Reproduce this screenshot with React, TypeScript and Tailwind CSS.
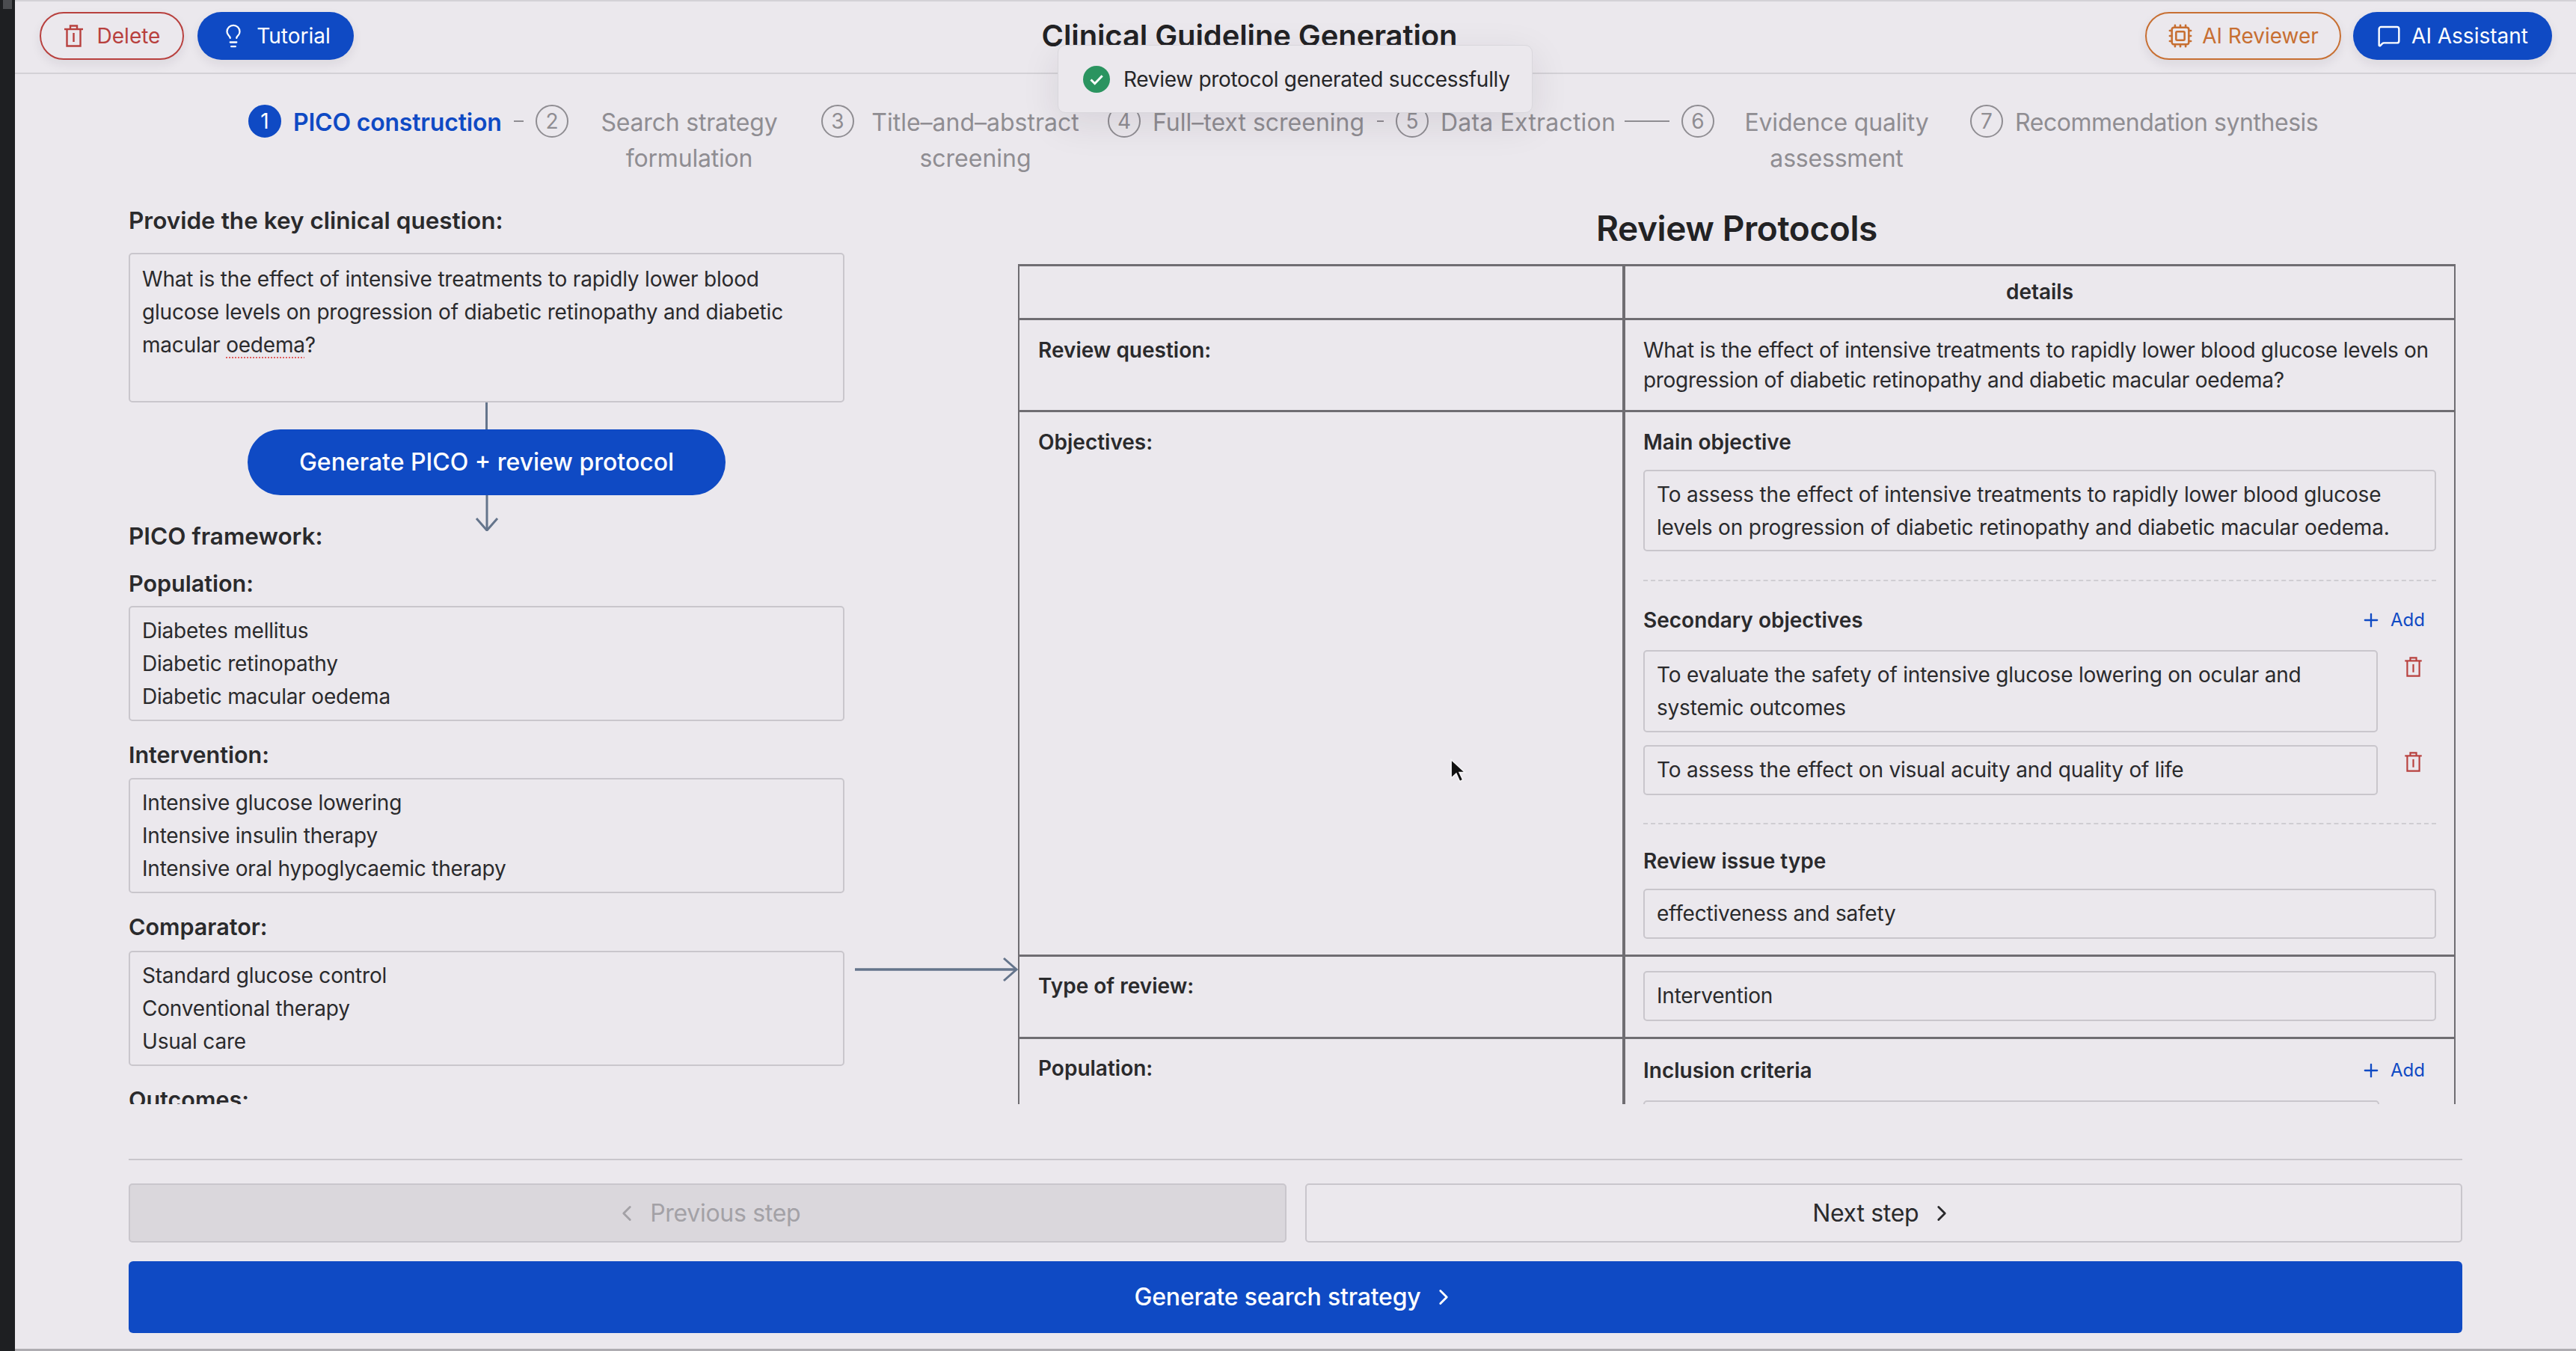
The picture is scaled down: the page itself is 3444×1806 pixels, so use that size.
// App.tsx
import React from "react";
import { ChevronLeft, ChevronRight, Cpu, Lightbulb, MessageSquare, Plus } from "lucide-react";

function TrashIcon({ className }: { className?: string }) {
  return (
    <svg viewBox="0 0 26 30" fill="none" stroke="currentColor" strokeWidth="2.4" className={className}>
      <path d="M0.5 6h25" />
      <path d="M8.5 6V1.5h9V6" />
      <path d="M4 6v22.5h18V6" />
      <path d="M13 11v12" />
    </svg>
  );
}

function Cursor() {
  return (
    <svg viewBox="0 0 24 34" className="absolute left-[1937px] top-[1012px] z-20 h-[36px] w-[25px]">
      <path
        d="M3 3v24l6.5-6 4.5 10 4-2-4.5-9.5H21z"
        fill="#111"
        stroke="#f6f5f7"
        strokeWidth="1.5"
      />
    </svg>
  );
}

function Step({
  num,
  active,
  label,
  textClass,
}: {
  num: number;
  active?: boolean;
  label: string;
  textClass: string;
}) {
  return (
    <div className="flex shrink-0 items-start">
      <span
        className={[
          "flex h-[44px] w-[44px] shrink-0 items-center justify-center rounded-full border-2 text-[28px]",
          active ? "border-[#0f4ac4] bg-[#0f4ac4] text-white" : "border-[#8f8d92] text-[#8f8d92]",
        ].join(" ")}
      >
        {num}
      </span>
      <span
        className={[
          "text-[32px] leading-[48px]",
          active ? "font-semibold text-[#0f4ac4]" : "text-[#8f8d92]",
          textClass,
        ].join(" ")}
      >
        {label}
      </span>
    </div>
  );
}

function Box({ children, className }: { children: React.ReactNode; className?: string }) {
  return (
    <div
      className={[
        "rounded-[5px] border-2 border-[#c9c6cc] px-[16px] text-[28px] leading-[44px] tracking-[-0.2px] text-[#2a2a2c]",
        className ?? "",
      ].join(" ")}
    >
      {children}
    </div>
  );
}

function Field({ label, lines, className }: { label: string; lines: string[]; className: string }) {
  return (
    <div>
      <div className="mt-[23px] text-[30.5px] font-semibold leading-[44px] text-[#2a2a2c]">{label}</div>
      <Box className={className}>
        {lines.map((l) => (
          <div key={l}>{l}</div>
        ))}
      </Box>
    </div>
  );
}

function SubHead({ label, add }: { label: string; add?: boolean }) {
  return (
    <div className="flex h-[44px] items-center justify-between">
      <span className="text-[28px] font-semibold text-[#2a2a2c]">{label}</span>
      {add && (
        <span className="flex items-center gap-[12px] pr-[15px] text-[24px] text-[#0f4ac4]">
          <Plus className="h-[28px] w-[28px]" strokeWidth={2} />
          Add
        </span>
      )}
    </div>
  );
}

function Row({
  label,
  children,
  className,
  labelClass,
}: {
  label: string;
  children: React.ReactNode;
  className?: string;
  labelClass?: string;
}) {
  return (
    <div className={["grid grid-cols-[806px_1fr] border-b-[3px] border-[#6f6d72]", className ?? ""].join(" ")}>
      <div className={["pl-[25px] text-[28px] font-semibold leading-[44px] text-[#2a2a2c]", labelClass ?? ""].join(" ")}>
        {label}
      </div>
      <div className="border-l-4 border-[#6f6d72] px-[24px]">{children}</div>
    </div>
  );
}

export default function App() {
  return (
    <main className="relative flex h-screen w-screen overflow-hidden bg-[#ebe8ed] font-['Inter',sans-serif] text-[#2a2a2c]">
      <Cursor />

      {/* window edge on the left */}
      <div className="w-[20px] shrink-0 bg-[#1e1f22]">
        <div className="mx-[4px] h-[12px] bg-[#4b4c50]" />
      </div>

      <div className="relative flex min-w-0 flex-1 flex-col border-t-2 border-b-[3px] border-t-[#d3d1d6] border-b-[#aeacb1]">
        {/* toast */}
        <div className="absolute left-[1394px] top-[58px] z-10 flex h-[91px] w-[635px] items-center gap-[18px] rounded-[10px] border border-[#d9d7dc] bg-[#ebe8ed] pl-[33px] shadow-[0_14px_50px_rgba(40,30,50,0.10)]">
          <svg viewBox="0 0 36 36" className="h-[36px] w-[36px]">
            <circle cx="18" cy="18" r="18" fill="#2b9460" />
            <path d="M10.5 18.5l5.2 5.2 10-10.5" fill="none" stroke="#fff" strokeWidth="3" />
          </svg>
          <span className="text-[28px] tracking-[-0.3px] text-[#262628]">Review protocol generated successfully</span>
        </div>

        <header className="flex h-[97px] shrink-0 items-center justify-between border-b-2 border-[#d3d1d6] pb-[3px] pl-[33px] pr-[32px]">
          <div className="flex items-center gap-[18px]">
            <button className="flex h-[64px] w-[193px] items-center justify-center gap-[18px] rounded-full border-2 border-[#b8403e] text-[28px] text-[#b8403e] shadow-[0_6px_14px_rgba(40,30,50,0.08)]">
              <TrashIcon className="h-[30px] w-[27px]" />
              Delete
            </button>
            <button className="flex h-[64px] w-[209px] items-center justify-center gap-[14px] rounded-full bg-[#0f4ac4] text-[28px] text-white shadow-[0_6px_14px_rgba(40,30,50,0.08)]">
              <Lightbulb className="h-[34px] w-[34px]" strokeWidth={1.6} />
              Tutorial
            </button>
          </div>
          <h1 className="text-[40px] font-semibold tracking-[-0.1px] text-[#222224]">Clinical Guideline Generation</h1>
          <div className="flex items-center gap-[16px]">
            <button className="flex h-[64px] w-[262px] items-center justify-center gap-[12px] rounded-full border-2 border-[#c76f32] text-[28px] text-[#c76f32] shadow-[0_6px_14px_rgba(40,30,50,0.08)]">
              <Cpu className="h-[34px] w-[34px]" strokeWidth={1.8} />
              AI Reviewer
            </button>
            <button className="flex h-[64px] w-[266px] items-center justify-center gap-[14px] rounded-full bg-[#0f4ac4] text-[28px] text-white shadow-[0_6px_14px_rgba(40,30,50,0.08)]">
              <MessageSquare className="h-[32px] w-[32px]" strokeWidth={1.8} />
              AI Assistant
            </button>
          </div>
        </header>

        {/* steps */}
        <nav className="flex h-[171px] shrink-0 items-start pl-[312px] pt-[41px]">
          <Step num={1} active label="PICO construction" textClass="ml-[16px] w-[278px] whitespace-nowrap tracking-[-0.2px]" />
          <span className="ml-[17px] mr-[16px] mt-[21px] h-[2px] w-[13px] shrink-0 bg-[#8f8d92]" />
          <Step num={2} label="Search strategy formulation" textClass="ml-[28px] w-[267px] text-center tracking-[-0.2px]" />
          <div className="w-[43px] shrink-0" />
          <Step num={3} label="Title–and–abstract screening" textClass="ml-[22px] w-[280px] text-center" />
          <div className="w-[37px] shrink-0" />
          <Step num={4} label="Full–text screening" textClass="ml-[16px] w-[283px] whitespace-nowrap" />
          <span className="ml-[17px] mr-[16px] mt-[21px] h-[2px] w-[9px] shrink-0 bg-[#8f8d92]" />
          <Step num={5} label="Data Extraction" textClass="ml-[16px] w-[230px] whitespace-nowrap tracking-[0.2px]" />
          <span className="ml-[16px] mr-[16px] mt-[21px] h-[2px] w-[60px] shrink-0 bg-[#8f8d92]" />
          <Step num={6} label="Evidence quality assessment" textClass="ml-[26px] w-[275px] text-center tracking-[-0.2px]" />
          <div className="w-[41px] shrink-0" />
          <Step num={7} label="Recommendation synthesis" textClass="ml-[16px] whitespace-nowrap tracking-[-0.45px]" />
        </nav>

        {/* main scroll area */}
        <section className="flex h-[1206px] shrink-0 overflow-hidden px-[152px]">
          <div className="w-[957px] shrink-0 pt-[3px]">
            <div className="text-[31.5px] font-semibold leading-[44px] text-[#2a2a2c]">Provide the key clinical question:</div>
            <Box className="mt-[21px] h-[200px] pt-[11px]">
              What is the effect of intensive treatments to rapidly lower blood glucose levels on progression of
              diabetic retinopathy and diabetic macular{" "}
              <span className="underline decoration-[#e06060] decoration-dotted decoration-2 underline-offset-[6px]">oedema</span>?
            </Box>
            <div className="mx-auto h-[36px] w-[3px] bg-[#64748b]" />
            <button className="mx-auto flex h-[88px] w-[639px] items-center justify-center rounded-full bg-[#0f4ac4] text-[32px] font-medium text-white">
              Generate PICO + review protocol
            </button>
            <svg viewBox="0 0 32 48" fill="none" stroke="#64748b" strokeWidth="3" className="mx-auto h-[48px] w-[32px]">
              <path d="M16 0v47" />
              <path d="M2 31l14 16 14-16" />
            </svg>
            <div className="-mt-[15px] text-[31.5px] font-semibold leading-[44px] text-[#2a2a2c]">PICO framework:</div>
            <div className="-mt-[4px]">
              <Field
                label="Population:"
                className="mt-[8px] py-[9px]"
                lines={["Diabetes mellitus", "Diabetic retinopathy", "Diabetic macular oedema"]}
              />
              <Field
                label="Intervention:"
                className="mt-[9px] py-[9px]"
                lines={["Intensive glucose lowering", "Intensive insulin therapy", "Intensive oral hypoglycaemic therapy"]}
              />
              <Field
                label="Comparator:"
                className="mt-[10px] py-[9px]"
                lines={["Standard glucose control", "Conventional therapy", "Usual care"]}
              />
              <Field label="Outcomes:" className="mt-[9px] py-[9px]" lines={["Progression of diabetic retinopathy"]} />
            </div>
          </div>

          {/* arrow from the left column to the table */}
          <div className="w-[232px] shrink-0 pl-[14px] pt-[1006px]">
            <svg viewBox="0 0 218 40" fill="none" stroke="#64748b" strokeWidth="3.5" className="h-[40px] w-[218px]">
              <path d="M0 20h216" />
              <path d="M199 5l17 15-17 15" strokeWidth="3" />
            </svg>
          </div>

          <div className="w-[1922px] shrink-0">
            <h2 className="mt-[5px] h-[60px] text-center text-[46px] font-semibold leading-[60px] tracking-[-0.4px] text-[#222224]">
              Review Protocols
            </h2>
            <div className="mt-[18px] border-x-2 border-t-[3px] border-[#6f6d72]">
              <Row label="" className="h-[72px]">
                <div className="pt-[12px] text-center text-[28px] font-semibold leading-[44px]">details</div>
              </Row>
              <Row label="Review question:" className="h-[123px]" labelClass="pt-[18px]">
                <div className="pt-[20px] text-[28px] leading-[40px] tracking-[-0.3px]">
                  What is the effect of intensive treatments to rapidly lower blood glucose levels on progression of
                  diabetic retinopathy and diabetic macular oedema?
                </div>
              </Row>
              <Row label="Objectives:" className="h-[728px]" labelClass="pt-[18px]">
                <div className="pt-[18px]">
                  <SubHead label="Main objective" />
                  <Box className="mt-[15px] h-[109px] pt-[9px]">
                    To assess the effect of intensive treatments to rapidly lower blood glucose levels on progression of
                    diabetic retinopathy and diabetic macular oedema.
                  </Box>
                  <div className="mt-[38px] border-t-2 border-dashed border-[#cfcdd2]" />
                  <div className="mt-[30px]">
                    <SubHead label="Secondary objectives" add />
                  </div>
                  <div className="mt-[18px] flex items-start">
                    <Box className="h-[110px] w-[982px] shrink-0 pt-[9px]">
                      To evaluate the safety of intensive glucose lowering on ocular and systemic outcomes
                    </Box>
                    <TrashIcon className="ml-[35px] mt-[9px] h-[27px] w-[25px] text-[#b8403e]" />
                  </div>
                  <div className="mt-[17px] flex items-start">
                    <Box className="h-[67px] w-[982px] shrink-0 pt-[9px]">
                      To assess the effect on visual acuity and quality of life
                    </Box>
                    <TrashIcon className="ml-[35px] mt-[9px] h-[27px] w-[25px] text-[#b8403e]" />
                  </div>
                  <div className="mt-[37px] border-t-2 border-dashed border-[#cfcdd2]" />
                  <div className="mt-[27px]">
                    <SubHead label="Review issue type" />
                  </div>
                  <Box className="mt-[15px] h-[67px] pt-[9px]">effectiveness and safety</Box>
                </div>
              </Row>
              <Row label="Type of review:" className="h-[110px]" labelClass="pt-[17px]">
                <div className="pt-[19px]">
                  <Box className="h-[67px] pt-[9px]">Intervention</Box>
                </div>
              </Row>
              <Row label="Population:" labelClass="pt-[17px]">
                <div className="pt-[20px]">
                  <SubHead label="Inclusion criteria" add />
                  <Box className="mt-[18px] h-[67px] w-[984px] pt-[9px]">Diabetes mellitus</Box>
                </div>
              </Row>
            </div>
          </div>
        </section>

        {/* footer actions */}
        <footer className="mx-[152px] mt-[73px] border-t-2 border-[#c9c6cc] pt-[31px]">
          <div className="flex gap-[25px]">
            <button className="flex h-[79px] flex-1 items-center justify-center gap-[14px] rounded-[5px] border-2 border-[#c9c6cc] bg-[#dad7dc] text-[32px] tracking-[-0.3px] text-[#a3a1a6]">
              <ChevronLeft className="h-[34px] w-[34px]" strokeWidth={2} />
              Previous step
            </button>
            <button className="flex h-[79px] flex-1 items-center justify-center gap-[14px] rounded-[5px] border-2 border-[#c9c6cc] text-[32px] tracking-[-0.3px] text-[#2a2a2c]">
              Next step
              <ChevronRight className="h-[34px] w-[34px]" strokeWidth={2} />
            </button>
          </div>
          <button className="mt-[25px] flex h-[96px] w-full items-center justify-center gap-[14px] rounded-[6px] bg-[#0f4ac4] text-[32px] font-medium tracking-[-0.2px] text-white">
            Generate search strategy
            <ChevronRight className="h-[34px] w-[34px]" strokeWidth={2} />
          </button>
        </footer>
      </div>
    </main>
  );
}
